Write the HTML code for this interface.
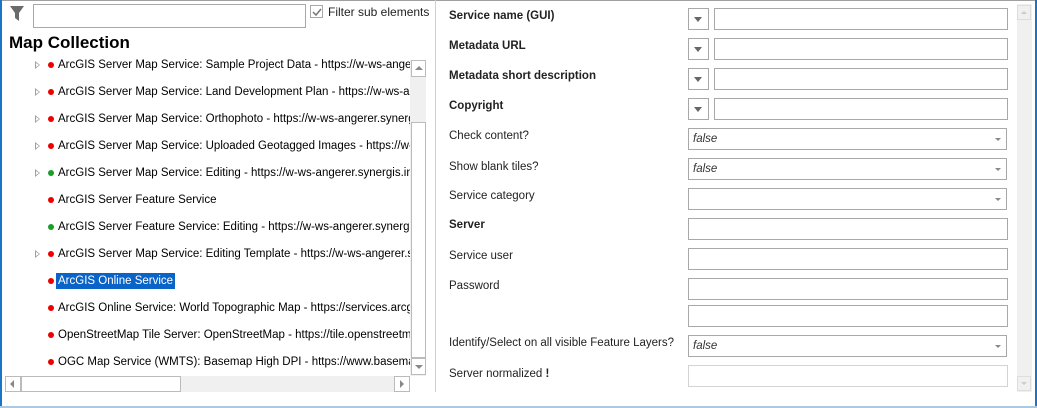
<!DOCTYPE html>
<html><head><style>
*{box-sizing:border-box;margin:0;padding:0}
body{width:1037px;height:408px;background:#fff;font-family:"Liberation Sans",sans-serif;font-size:11.5px;color:#000;position:relative;overflow:hidden}
.a{position:absolute}
.tree{position:absolute;left:0;top:0;width:410px;height:376px;overflow:hidden}
.row{position:absolute;left:35px;height:16px;line-height:16px;white-space:nowrap}
.exp{position:absolute;left:0;top:4px;width:0;height:0;border-left:5px solid #a0a0a0;border-top:4px solid transparent;border-bottom:4px solid transparent}
.exp:after{content:"";position:absolute;left:-4px;top:-2px;border-left:3px solid #fff;border-top:2px solid transparent;border-bottom:2px solid transparent}
.dot{position:absolute;left:13px;top:5px;width:6px;height:6px;border-radius:50%;background:#e00}
.g{background:#1a9e2a}
.t{position:absolute;left:21px;top:0;padding:0 2px;font-size:11.5px}
.lab{position:absolute;left:449px;font-size:11.5px;color:#222}
.b{font-weight:bold}
.box{position:absolute;border:1px solid #a8a8a8;background:#fff;height:22px}
.dd{position:absolute;left:688px;width:21px;height:22px;border:1px solid #a8a8a8;background:#fff}
.dd:after{content:"";position:absolute;left:5px;top:8px;border-top:5px solid #666;border-left:4px solid transparent;border-right:4px solid transparent}
.cb{position:absolute;left:688px;width:319px;height:22px;border:1px solid #a8a8a8;font-style:italic;font-size:11.5px;line-height:20px;padding-left:4px;color:#333}
.cb:after{content:"";position:absolute;right:5px;top:9px;border-top:3px solid #888;border-left:3px solid transparent;border-right:3px solid transparent}
</style></head><body>
<div class="a" style="left:0;top:0;width:1037px;height:1px;background:#a0a0a0"></div>
<div class="a" style="left:0;top:0;width:2px;height:408px;background:#1b74c6"></div>
<div class="a" style="left:1035px;top:0;width:2px;height:408px;background:#1b74c6"></div>
<div class="a" style="left:0;top:406px;width:1037px;height:2px;background:#a9c9e6"></div>
<div class="a" style="left:435px;top:0;width:1px;height:392px;background:#d0d0d0"></div>

<svg class="a" style="left:9px;top:5px" width="16" height="18"><path d="M1 1H15L10 8V16L6 13V8Z" fill="#6a6a6a"/></svg>
<div class="box" style="left:33px;top:4px;width:273px;height:24px"></div>
<div class="a" style="left:310px;top:5px;width:13px;height:13px;border:1px solid #a8a8a8"></div>
<svg class="a" style="left:311px;top:6px" width="12" height="12"><path d="M2 6L5 9L10 3" stroke="#777" stroke-width="1.5" fill="none"/></svg>
<div class="a" style="left:328px;top:5px;font-size:12px;color:#222">Filter sub elements</div>
<div class="a" style="left:9px;top:33px;font-size:17px;font-weight:bold">Map Collection</div>

<div class="tree">
<div class="row" style="top:57px"><div class="exp"></div><div class="dot"></div><div class="t">ArcGIS Server Map Service: Sample Project Data - https://w-ws-angerer.synergis</div></div>
<div class="row" style="top:84px"><div class="exp"></div><div class="dot"></div><div class="t">ArcGIS Server Map Service: Land Development Plan - https://w-ws-angerer</div></div>
<div class="row" style="top:111px"><div class="exp"></div><div class="dot"></div><div class="t">ArcGIS Server Map Service: Orthophoto - https://w-ws-angerer.synergis.info</div></div>
<div class="row" style="top:138px"><div class="exp"></div><div class="dot"></div><div class="t">ArcGIS Server Map Service: Uploaded Geotagged Images - https://w-ws</div></div>
<div class="row" style="top:165px"><div class="exp"></div><div class="dot g"></div><div class="t">ArcGIS Server Map Service: Editing - https://w-ws-angerer.synergis.info</div></div>
<div class="row" style="top:192px"><div class="dot"></div><div class="t">ArcGIS Server Feature Service</div></div>
<div class="row" style="top:219px"><div class="dot g"></div><div class="t">ArcGIS Server Feature Service: Editing - https://w-ws-angerer.synergis.info</div></div>
<div class="row" style="top:246px"><div class="exp"></div><div class="dot"></div><div class="t">ArcGIS Server Map Service: Editing Template - https://w-ws-angerer.synergis</div></div>
<div class="row" style="top:273px"><div class="dot"></div><div class="t" style="background:#0a64c8;color:#fff">ArcGIS Online Service</div></div>
<div class="row" style="top:300px"><div class="dot"></div><div class="t">ArcGIS Online Service: World Topographic Map - https://services.arcgis.com</div></div>
<div class="row" style="top:327px"><div class="dot"></div><div class="t">OpenStreetMap Tile Server: OpenStreetMap - https://tile.openstreetmap.org</div></div>
<div class="row" style="top:354px"><div class="dot"></div><div class="t">OGC Map Service (WMTS): Basemap High DPI - https://www.basemap.at</div></div>
</div>

<div class="a" style="left:410px;top:60px;width:16px;height:316px;background:#f0f0f0"></div>
<div class="a" style="left:411px;top:60px;width:15px;height:17px;border:1px solid #bbb;background:#fff"></div>
<div class="a" style="left:415px;top:66px;border-bottom:4px solid #888;border-left:4px solid transparent;border-right:4px solid transparent"></div>
<div class="a" style="left:411px;top:122px;width:15px;height:236px;border:1px solid #bbb;background:#fff"></div>
<div class="a" style="left:411px;top:358px;width:15px;height:17px;border:1px solid #bbb;background:#fff"></div>
<div class="a" style="left:415px;top:365px;border-top:4px solid #888;border-left:4px solid transparent;border-right:4px solid transparent"></div>
<div class="a" style="left:5px;top:376px;width:405px;height:16px;background:#f0f0f0"></div>
<div class="a" style="left:5px;top:376px;width:16px;height:16px;border:1px solid #bbb;background:#fff"></div>
<div class="a" style="left:10px;top:380px;border-right:4px solid #888;border-top:4px solid transparent;border-bottom:4px solid transparent"></div>
<div class="a" style="left:21px;top:376px;width:160px;height:16px;border:1px solid #bbb;background:#fff"></div>
<div class="a" style="left:394px;top:376px;width:16px;height:16px;border:1px solid #bbb;background:#fff"></div>
<div class="a" style="left:400px;top:380px;border-left:4px solid #888;border-top:4px solid transparent;border-bottom:4px solid transparent"></div>

<div class="lab b" style="top:10px">Service name (GUI)</div>
<div class="dd" style="top:8px"></div><div class="box" style="left:714px;top:8px;width:294px"></div>
<div class="lab b" style="top:40px">Metadata URL</div>
<div class="dd" style="top:38px"></div><div class="box" style="left:714px;top:38px;width:294px"></div>
<div class="lab b" style="top:70px">Metadata short description</div>
<div class="dd" style="top:68px"></div><div class="box" style="left:714px;top:68px;width:294px"></div>
<div class="lab b" style="top:100px">Copyright</div>
<div class="dd" style="top:98px"></div><div class="box" style="left:714px;top:98px;width:294px"></div>
<div class="lab" style="top:130px">Check content?</div>
<div class="cb" style="top:128px">false</div>
<div class="lab" style="top:161px">Show blank tiles?</div>
<div class="cb" style="top:158px">false</div>
<div class="lab" style="top:190px">Service category</div>
<div class="cb" style="top:188px"></div>
<div class="lab b" style="top:219px">Server</div>
<div class="box" style="left:688px;top:218px;width:320px"></div>
<div class="lab" style="top:250px">Service user</div>
<div class="box" style="left:688px;top:248px;width:320px"></div>
<div class="lab" style="top:280px">Password</div>
<div class="box" style="left:688px;top:278px;width:320px"></div>
<div class="box" style="left:688px;top:305px;width:320px"></div>
<div class="lab" style="top:337px">Identify/Select on all visible Feature Layers?</div>
<div class="cb" style="top:335px">false</div>
<div class="lab" style="top:368px">Server normalized <b>!</b></div>
<div class="box" style="left:688px;top:365px;width:320px;border-color:#d4d4d4"></div>

<div class="a" style="left:1017px;top:4px;width:15px;height:388px;background:#f0f0f0"></div>
<div class="a" style="left:1017px;top:5px;width:14px;height:15px;border:1px solid #ddd"></div>
<div class="a" style="left:1021px;top:11px;border-bottom:3px solid #ccc;border-left:3px solid transparent;border-right:3px solid transparent"></div>
<div class="a" style="left:1017px;top:376px;width:14px;height:15px;border:1px solid #ddd"></div>
<div class="a" style="left:1021px;top:382px;border-top:3px solid #ccc;border-left:3px solid transparent;border-right:3px solid transparent"></div>
</body></html>
